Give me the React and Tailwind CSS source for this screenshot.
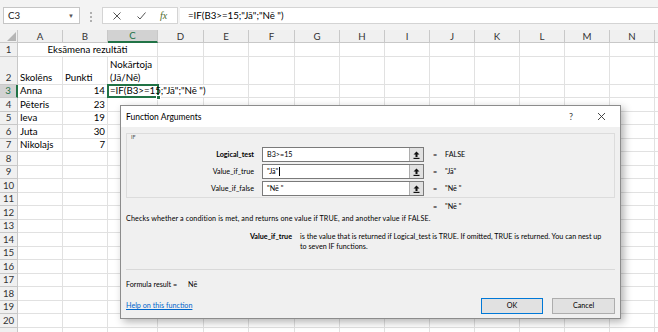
import React from 'react';

const cols = ['A', 'B', 'C', 'D', 'E', 'F', 'G', 'H', 'I', 'J', 'K', 'L', 'M', 'N', ''];

const data = {
  2: { A: 'Skolēns', B: 'Punkti' },
  3: { A: 'Anna', B: '14' },
  4: { A: 'Pēteris', B: '23' },
  5: { A: 'Ieva', B: '19' },
  6: { A: 'Juta', B: '30' },
  7: { A: 'Nikolajs', B: '7' },
};

const rowHeight = (r) => {
  if (r === 1) return 'h-[14px]';
  if (r === 2) return 'h-[28px]';
  if (r === 3) return 'h-[13px]';
  return 'h-[13.5px]';
};

function UpBtn() {
  return (
    <div className="w-[14px] h-full border-l border-[#adadad] bg-[#e1e1e1] flex items-center justify-center">
      <svg width="7" height="8" viewBox="0 0 7 8">
        <path d="M3.5 0.5 L6.5 3.5 L4.5 3.5 L4.5 6 L2.5 6 L2.5 3.5 L0.5 3.5 Z" fill="#111" />
        <rect x="0.5" y="6.8" width="6" height="1.2" fill="#111" />
      </svg>
    </div>
  );
}

function ArgRow({ label, bold, value, result, caret }) {
  return (
    <div className="flex items-center h-[15px]">
      <div className={`w-[127px] text-right ${bold ? 'font-bold' : ''}`}>{label}</div>
      <div className="ml-[8px] w-[162px] h-full bg-white border border-[#7a7a7a] flex items-center">
        <div className="flex-1 pl-[4px] flex items-center">
          {value}
          {caret && <span className="inline-block w-px h-[9px] bg-black ml-px" />}
        </div>
        <UpBtn />
      </div>
      <div className="ml-[9px] w-[12px]">=</div>
      <div>{result}</div>
    </div>
  );
}

function Dialog() {
  return (
    <div
      className="absolute left-[120px] top-[105px] w-[501px] h-[214px] bg-[#f0f0f0] border border-[#8c8c8c] shadow-[3px_3px_8px_rgba(0,0,0,0.3)] flex flex-col text-[7.2px] leading-[10px] text-black"
      style={{ fontFamily: 'Lato, "Noto Sans", sans-serif' }}
    >
      <div className="h-[21px] bg-white flex items-center pl-[5px] text-[8.5px] shrink-0">
        <span className="flex-1">Function Arguments</span>
        <span className="text-[9px] text-[#444] mr-[24px]">?</span>
        <svg width="9" height="9" viewBox="0 0 9 9" className="mr-[14px]">
          <path d="M1 1 L8 8 M8 1 L1 8" stroke="#333" strokeWidth="0.9" />
        </svg>
      </div>
      <div className="px-[5px] flex flex-col">
        <div className="mt-[6px] h-[65px] border border-[#dcdcdc] flex flex-col">
          <div className="h-[6px] leading-[6px] text-[5.5px] pl-[4px] text-[#555]">IF</div>
          <div className="mt-[7px] flex flex-col gap-[2px]">
            <ArgRow label="Logical_test" bold value="B3>=15" result="FALSE" />
            <ArgRow label="Value_if_true" value={'"Jā"'} result={'"Jā"'} caret />
            <ArgRow label="Value_if_false" value={'"Nē "'} result={'"Nē "'} />
          </div>
        </div>
        <div className="mt-[4px] flex">
          <div className="w-[307px]" />
          <div className="w-[12px]">=</div>
          <div>"Nē "</div>
        </div>
        <div className="mt-[2px] tracking-[0.1px]">
          Checks whether a condition is met, and returns one value if TRUE, and another value if FALSE.
        </div>
        <div className="mt-[8px] flex">
          <div className="w-[166px] text-right font-bold">Value_if_true</div>
          <div className="ml-[8px]">
            is the value that is returned if Logical_test is TRUE. If omitted, TRUE is returned. You can nest up
            <br />
            to seven IF functions.
          </div>
        </div>
        <div className="mt-[17px] border-t border-[#d9d9d9]" />
        <div className="mt-[10px] flex">
          <span className="w-[62px]">Formula result =</span>
          <span>Nē</span>
        </div>
        <div className="mt-[8px] h-[16px] flex items-center">
          <span className="flex-1 text-[#0066cc] underline">Help on this function</span>
          <div className="w-[62px] h-[16px] bg-[#e1e1e1] border border-[#0078d7] flex items-center justify-center">OK</div>
          <div className="ml-[9px] w-[63px] h-[16px] bg-[#e1e1e1] border border-[#adadad] flex items-center justify-center">Cancel</div>
        </div>
      </div>
    </div>
  );
}

export default function App() {
  const rows = Array.from({ length: 21 }, (_, i) => i + 1);
  return (
    <div
      className="relative w-[658px] h-[332px] overflow-hidden bg-white text-[9.7px] text-black"
      style={{ fontFamily: 'Lato, "Liberation Sans", sans-serif' }}
    >
      {/* formula bar */}
      <div className="h-[30px] bg-[#f3f3f3] relative">
        <div className="absolute left-[3px] top-[7px] w-[77px] h-[17px] bg-white border border-[#c6c6c6] flex items-center pl-[4px] pr-[5px]">
          <span className="flex-1 text-[#222]">C3</span>
          <span className="text-[6px] text-[#555]">▼</span>
        </div>
        <div className="absolute left-[90px] top-[12px] flex flex-col gap-[2px]">
          <span className="w-[2px] h-[2px] bg-[#b0b0b0]" />
          <span className="w-[2px] h-[2px] bg-[#b0b0b0]" />
          <span className="w-[2px] h-[2px] bg-[#b0b0b0]" />
        </div>
        <div className="absolute left-[102px] top-[7px] w-[76px] h-[17px] bg-white border border-[#d4d4d4] flex items-center">
          <svg width="8" height="8" viewBox="0 0 8 8" className="ml-[10px]">
            <path d="M0.5 0.5 L7.5 7.5 M7.5 0.5 L0.5 7.5" stroke="#555" strokeWidth="1" />
          </svg>
          <svg width="9" height="8" viewBox="0 0 9 8" className="ml-[16px]">
            <path d="M0.5 4.5 L3 7 L8.5 0.5" stroke="#555" strokeWidth="1" fill="none" />
          </svg>
          <span
            className="ml-[14px] italic text-[10px] text-[#4d6b2c]"
            style={{ fontFamily: '"Liberation Serif", serif' }}
          >
            fx
          </span>
        </div>
        <div className="absolute left-[180px] right-0 top-[7px] h-[17px] bg-white border-y border-[#d4d4d4] flex items-center pl-[8px]">
          =IF(B3&gt;=15;"Jā";"Nē ")
        </div>
      </div>

      {/* sheet grid */}
      <div className="grid grid-cols-[18px_45px_45px_50px_46px_45px_46px_45px_45px_45px_45px_45px_45px_45px_45px_1fr]">
        {/* header row */}
        <div className="h-[13px] bg-[#f0f0f0] border-r border-b border-[#c8c8c8] relative">
          <svg width="9" height="9" viewBox="0 0 9 9" className="absolute right-[1px] bottom-[1px]">
            <path d="M9 0 L9 9 L0 9 Z" fill="#b5b5b5" />
          </svg>
        </div>
        {cols.map((c) => (
          <div
            key={c || 'x'}
            className={`h-[13px] flex items-center justify-center border-r ${
              c === 'C'
                ? 'bg-[#d2d2d2] text-[#217346] border-b-2 border-b-[#217346] border-r-[#c8c8c8]'
                : 'bg-[#f0f0f0] text-[#333] border-b border-[#c8c8c8]'
            }`}
          >
            {c}
          </div>
        ))}
        {rows.map((r) => (
          <React.Fragment key={r}>
            <div
              className={`${rowHeight(r)} flex items-end justify-center leading-[13px] border-b ${
                r === 3
                  ? 'bg-[#d2d2d2] text-[#217346] border-r-2 border-r-[#217346] border-b-[#c8c8c8]'
                  : 'bg-[#f0f0f0] text-[#333] border-r border-[#c8c8c8]'
              }`}
            >
              {r < 21 ? r : ''}
            </div>
            {r === 1 ? (
              <>
                <div className={`${rowHeight(r)} col-span-3 flex items-end justify-center leading-[13px] border-r border-b border-[#e1e1e1]`}>
                  Eksāmena rezultāti
                </div>
                {cols.slice(3).map((c) => (
                  <div key={c || 'x'} className={`${rowHeight(r)} border-r border-b border-[#e1e1e1]`} />
                ))}
              </>
            ) : (
              cols.map((c) => {
                const v = data[r] && data[r][c];
                if (r === 2 && c === 'C') {
                  return (
                    <div key={c} className={`${rowHeight(r)} flex flex-col justify-end leading-[13px] px-[2px] border-r border-b border-[#e1e1e1]`}>
                      <span>Nokārtoja</span>
                      <span>(Jā/Nē)</span>
                    </div>
                  );
                }
                if (r === 3 && c === 'C') {
                  return (
                    <div key={c} className={`${rowHeight(r)} relative border-b border-[#e1e1e1]`}>
                      <div className="absolute -left-[1px] -top-[1px] -right-[1px] -bottom-[1px] border-2 border-[#217346] z-10" />
                      <span className="absolute left-[2px] bottom-0 leading-[13px] whitespace-nowrap z-20">
                        =IF(B3&gt;=15;"Jā";"Nē ")
                      </span>
                      <div className="absolute -right-[3px] -bottom-[3px] w-[5px] h-[5px] bg-[#217346] border border-white z-30" />
                    </div>
                  );
                }
                const noRight = r === 3 && c === 'D';
                return (
                  <div
                    key={c || 'x'}
                    className={`${rowHeight(r)} flex items-end leading-[13px] px-[2px] border-b border-[#e1e1e1] ${
                      noRight ? '' : 'border-r'
                    } ${c === 'B' && r > 2 ? 'justify-end' : ''}`}
                  >
                    {v}
                  </div>
                );
              })
            )}
          </React.Fragment>
        ))}
      </div>

      <Dialog />
    </div>
  );
}
